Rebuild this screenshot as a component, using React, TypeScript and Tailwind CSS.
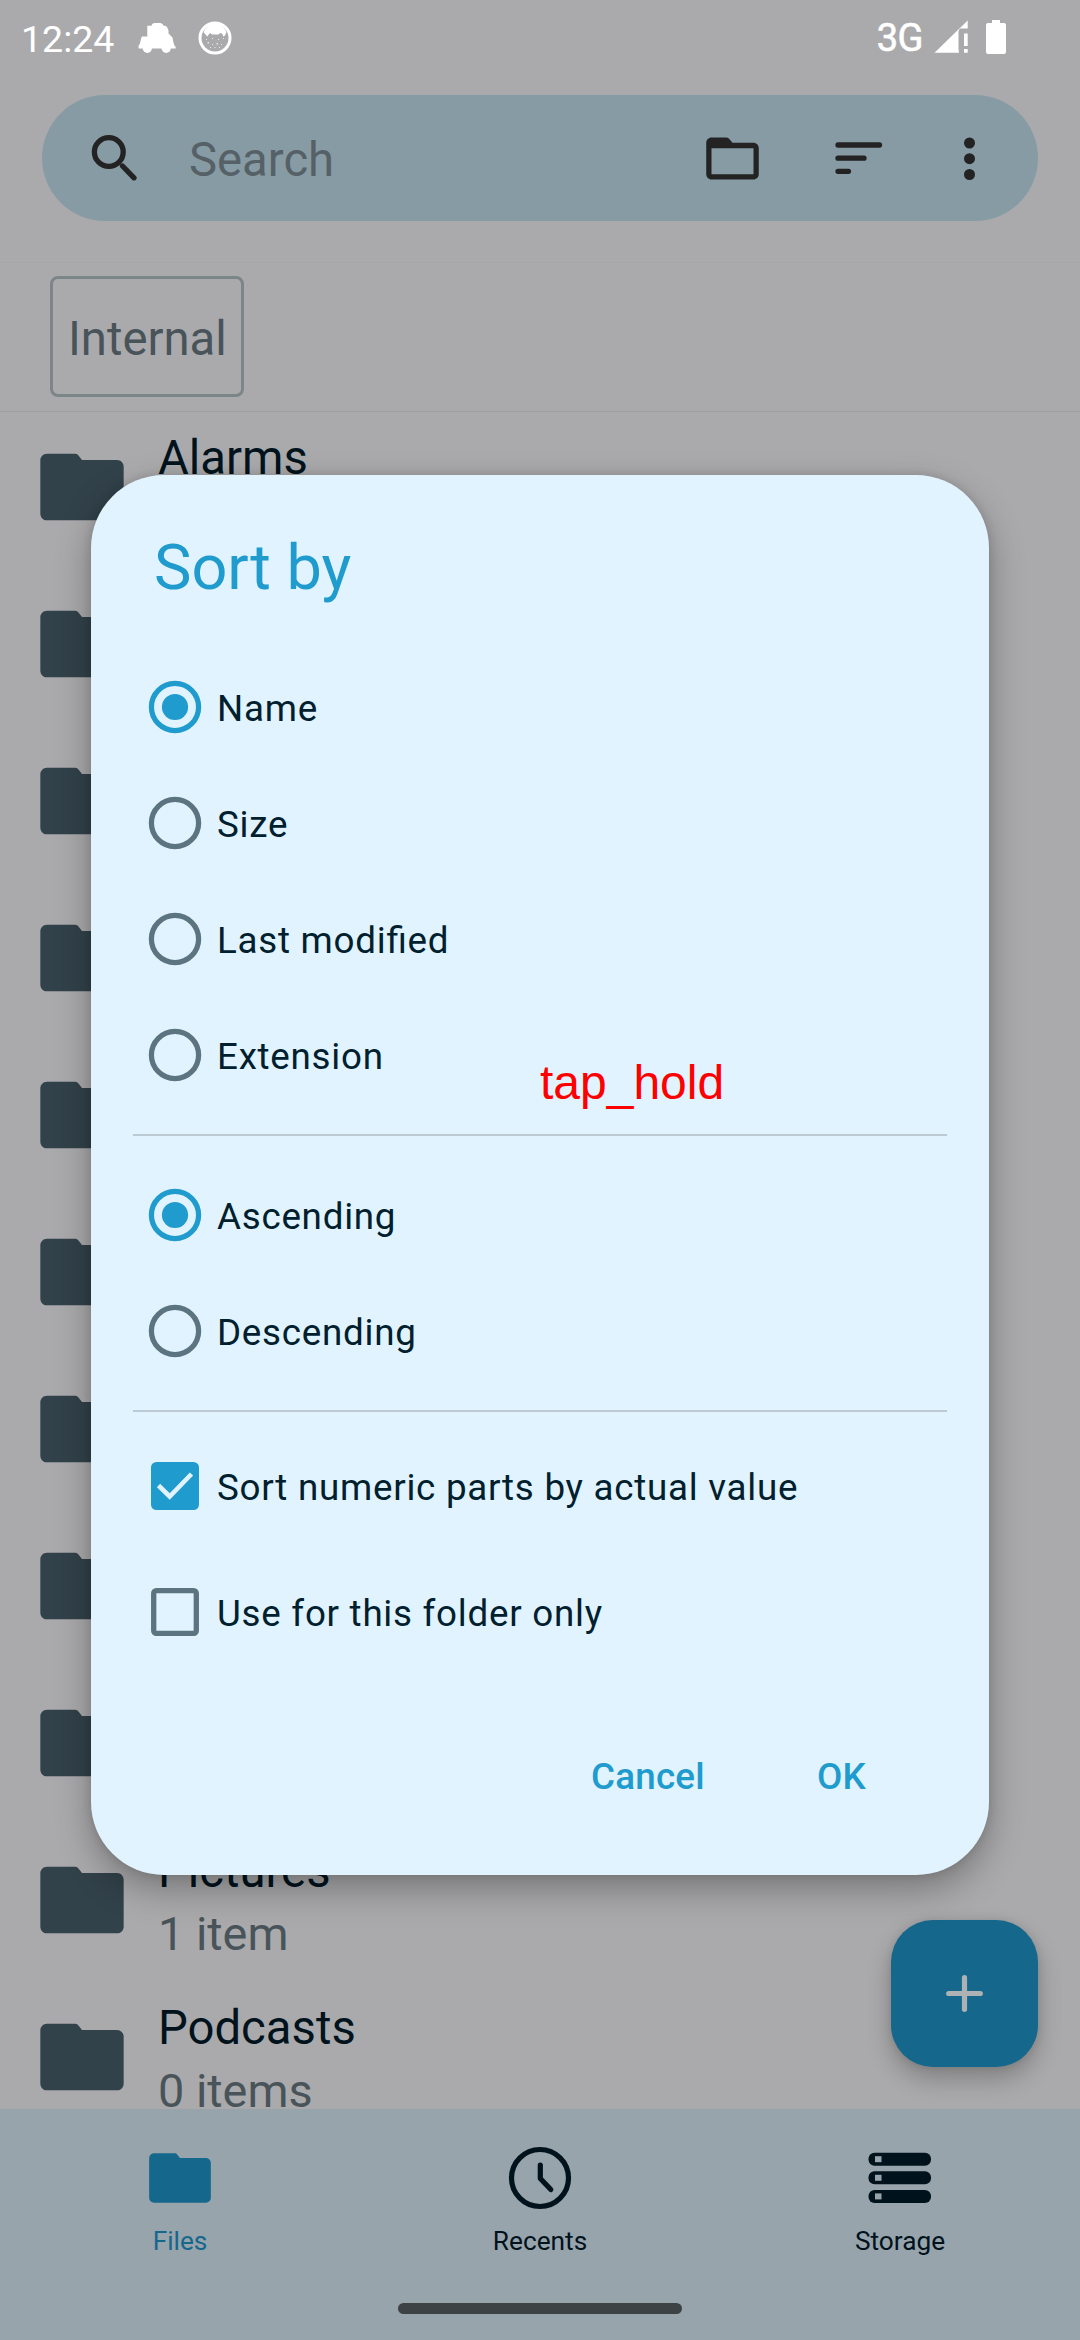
import React from "react";

type FileEntry = { name?: string; detail?: string };

const entries: FileEntry[] = [
  { name: "Alarms" },
  {},
  {},
  {},
  {},
  {},
  {},
  {},
  {},
  { name: "Pictures", detail: "1 item" },
  { name: "Podcasts", detail: "0 items" },
];

function FolderIcon({ className }: { className: string }) {
  return (
    <svg viewBox="0 0 24 24" className={className} fill="currentColor">
      <path d="M10.4 4H3.6C2.7 4 2 4.7 2 5.6V18.4C2 19.3 2.7 20 3.6 20H20.4C21.3 20 22 19.3 22 18.4V7.1C22 6.2 21.3 5.5 20.4 5.5H12L11.2 4.5C11 4.2 10.7 4 10.4 4Z" />
    </svg>
  );
}

function StatusBar() {
  return (
    <div className="flex h-[95px] items-start pl-[21px] pr-[74px] pt-[16px] text-white">
      <div className="h-[46px] w-[117px] text-[37.5px] leading-[46px]">12:24</div>
      <svg viewBox="0 0 110 56" className="-mt-[6px] ml-[-8px] h-[56px] w-[110px] shrink-0" fill="#fff">
        <path d="M17.300 15.700H21.300L22.500 13.700L24.500 13H30.500L32.500 14L33.500 15.700H35.500L37.300 17.500L38.500 20.500V23.500L40.500 25.500L42.500 27.500L43.300 32L44.500 35.500L45.700 37V38.500H8.700L8.500 36L10 33.500L11 28.500L12 26.500H17.300Z" />
        <circle cx="17.300" cy="38.300" r="4.600" />
        <circle cx="36.200" cy="38.300" r="4.600" />
        <circle cx="85" cy="28" r="15" fill="none" stroke="#fff" strokeWidth="3" />
        <path d="M73.500 22C76 16 81 13.500 85 13.500C89 13.500 94 16 96.500 22L95 25.500L93.500 26.500L92 23.500L90 23L88.500 24.500H82L80.500 23L79 24L77.500 26.500L75.500 24.500Z" />
        <g opacity="0.7">
          <path d="M76 29h1v1h-1zM82 28h1v1h-1zM88 29h1v1h-1zM93 28h1v1h-1zM86.500 33h1.500v1.500h-1.500zM77.500 32h1.500v1.500h-1.500zM82 34h1v1h-1zM91 34h1v1h-1zM80 37h1v1h-1zM84.500 37h1v1h-1zM89 37h1v1h-1z" />
        </g>
      </svg>
      <div className="ml-auto flex h-[42px]">
        <div className="pt-px text-[38px] leading-[42px] tracking-[-0.5px] [-webkit-text-stroke:0.6px_#fff]">3G</div>
        <svg viewBox="0 0 34 42" className="ml-[11px] h-[42px] w-[34px]" fill="#fff">
          <path d="M0.500 36.700L33.700 4.500V12.500H26L24.500 15V33L25 36.700Z" />
          <path d="M30 17.500H33.700V30H30ZM30 33H33.700V36.700H30Z" />
        </svg>
        <svg viewBox="0 0 20 42" className="ml-[18px] h-[42px] w-[20px]" fill="#fff">
          <path d="M6 4H14V7H18Q20 7 20 9V36Q20 38 18 38H2Q0 38 0 36V9Q0 7 2 7H6Z" />
        </svg>
      </div>
    </div>
  );
}

function SearchBar() {
  return (
    <div className="mx-[42px] flex h-[126px] items-center rounded-full bg-[#879ba4] pl-[42px] pr-[37px] text-[#222322]">
      <svg viewBox="0 0 63 63" className="size-[63px]" fill="none" stroke="currentColor" strokeWidth="5.3" strokeLinecap="round">
        <circle cx="24.800" cy="25" r="14.400" />
        <path d="M38.500 39L50 50.800" />
      </svg>
      <div className="ml-[42px] pt-[4px] text-[47.25px] leading-[56px] text-[#556167]">Search</div>
      <svg viewBox="0 0 24 24" className="ml-auto size-[63px]" fill="currentColor" fillRule="evenodd">
        <path d="M9.500 4H4C2.900 4 2 4.900 2 6V18C2 19.100 2.900 20 4 20H20C21.100 20 22 19.100 22 18V8C22 6.900 21.100 6 20 6H12L10.700 4.500Q10.200 4 9.500 4ZM4 8.100V18H20V8.100Z" />
      </svg>
      <svg viewBox="0 0 63 63" className="ml-[63px] size-[63px]" stroke="currentColor" strokeWidth="5.3" strokeLinecap="round">
        <path d="M11 18H52.500M11 31.200H37M11 44.300H21.500" />
      </svg>
      <svg viewBox="0 0 63 63" className="ml-[48px] size-[63px]" fill="currentColor">
        <circle cx="31.500" cy="16" r="5.500" />
        <circle cx="31.500" cy="31.700" r="5.500" />
        <circle cx="31.500" cy="47.500" r="5.500" />
      </svg>
    </div>
  );
}

function Breadcrumb() {
  return (
    <div className="h-[191px] border-b border-[#a0a0a2]">
      <div className="h-[42px] border-b border-[#a7a7a9]" />
      <div className="ml-[50px] mt-[13px] flex h-[121px] w-[194px] items-center rounded-[8px] border-[3px] border-[#7c8588] pl-[15px] pt-[5px] text-[47.25px] leading-[56px] text-[#485459]">
        Internal
      </div>
    </div>
  );
}

function FileRow({ name, detail }: FileEntry) {
  return (
    <div className="flex h-[157px] shrink-0 items-start pl-[32px]">
      <FolderIcon className="mt-[25px] size-[100px] text-[#32424a]" />
      <div className="ml-[26px] pt-[15px] text-[47.25px] leading-[62.5px]">
        {name && <div className="text-[#00131d]">{name}</div>}
        {detail && <div className="text-[46.8px] text-[#485459]">{detail}</div>}
      </div>
    </div>
  );
}

function BottomNav() {
  return (
    <div className="flex h-[231px] flex-col bg-[#98a4ac] text-[#00131d]">
      <div className="grid grid-cols-3 text-[26.25px] leading-[32px]">
        <div className="flex flex-col items-center pt-[32px] text-[#15678b]">
          <FolderIcon className="size-[74px]" />
          <span className="mt-[10px]">Files</span>
        </div>
        <div className="flex flex-col items-center pt-[32px]">
          <svg viewBox="0 0 74 74" className="size-[74px]" fill="none" stroke="currentColor" strokeWidth="5.2" strokeLinecap="round" strokeLinejoin="round">
            <circle cx="37" cy="37" r="28.500" />
            <path d="M37.300 24V37.500L47.800 48.500" />
          </svg>
          <span className="mt-[10px]">Recents</span>
        </div>
        <div className="flex flex-col items-center pt-[32px]">
          <svg viewBox="0 0 74 74" className="size-[74px]" fill="currentColor">
            <rect x="5.500" y="11.700" width="62.500" height="13" rx="6" />
            <rect x="5.500" y="30.300" width="62.500" height="13" rx="6" />
            <rect x="5.500" y="48.900" width="62.500" height="13" rx="6" />
            <g fill="#98a4ac">
              <rect x="12" y="15.200" width="6.500" height="6" />
              <rect x="12" y="33.800" width="6.500" height="6" />
              <rect x="12" y="52.400" width="6.500" height="6" />
            </g>
          </svg>
          <span className="mt-[10px]">Storage</span>
        </div>
      </div>
      <div className="mx-auto mt-[46px] h-[11px] w-[284px] rounded-full bg-[#3d4245]" />
    </div>
  );
}

function RadioRow({ label, checked = false }: { label: string; checked?: boolean }) {
  return (
    <div className="flex h-[116px] items-center">
      <svg viewBox="0 0 84 84" className="size-[84px]">
        <circle cx="42" cy="42" r="23.600" fill="none" stroke={checked ? "#209bcd" : "#5b7480"} strokeWidth="5.25" />
        {checked && <circle cx="42" cy="42" r="13.100" fill="#209bcd" />}
      </svg>
      <span className="pt-[4px]">{label}</span>
    </div>
  );
}

function CheckRow({ label, checked = false }: { label: string; checked?: boolean }) {
  return (
    <div className="flex h-[126px] items-center">
      <svg viewBox="0 0 84 84" className="size-[84px]">
        {checked ? (
          <>
            <rect x="18" y="18" width="48" height="48" rx="5.500" fill="#209bcd" />
            <path d="M25.500 41.500L36.700 52.500L58.500 30" fill="none" stroke="#e1f3ff" strokeWidth="4.600" />
          </>
        ) : (
          <rect x="20.700" y="20.700" width="42.600" height="42.600" rx="2.500" fill="none" stroke="#5b7480" strokeWidth="5.300" />
        )}
      </svg>
      <span className="pt-[4px]">{label}</span>
    </div>
  );
}

function SortDialog() {
  return (
    <div className="absolute left-[91px] top-[475px] h-[1400px] w-[898px] rounded-[73px] bg-[#e1f3ff] px-[42px] pt-[56px] shadow-[0_14px_36px_rgba(0,0,0,0.3),0_0_10px_rgba(0,0,0,0.12)]">
      <div className="ml-[21px] text-[63px] leading-[74px] text-[#209bcd]">Sort by</div>
      <div className="text-[36.75px] leading-[44px] tracking-[0.74px] text-[#00202e] [font-feature-settings:'liga'_1]">
        <div className="mt-[44px]">
          <RadioRow label="Name" checked />
          <RadioRow label="Size" />
          <RadioRow label="Last modified" />
          <RadioRow label="Extension" />
        </div>
        <div className="my-[21px] h-[2px] w-[814px] bg-[#bdc9d3]" />
        <RadioRow label="Ascending" checked />
        <RadioRow label="Descending" />
        <div className="mb-[11px] mt-[21px] h-[2px] w-[814px] bg-[#bdc9d3]" />
        <CheckRow label="Sort numeric parts by actual value" checked />
        <CheckRow label="Use for this folder only" />
      </div>
      <div className="mt-[80px] flex justify-end pr-[81px] text-[36.75px] font-medium leading-[44px] tracking-[0.26px] text-[#209bcd]">
        <span>Cancel</span>
        <span className="ml-[112px]">OK</span>
      </div>
    </div>
  );
}

export default function App() {
  return (
    <div className="relative flex h-[2340px] w-[1080px] flex-col overflow-hidden bg-[#aaaaac] font-['Roboto',sans-serif]">
      <StatusBar />
      <SearchBar />
      <Breadcrumb />
      <div className="relative flex h-[1697px] flex-col overflow-hidden">
        {entries.map((entry, i) => (
          <FileRow key={i} name={entry.name} detail={entry.detail} />
        ))}
        <div className="absolute bottom-[42px] right-[42px] flex size-[147px] items-center justify-center rounded-[42px] bg-[#15678b] shadow-[0_12px_24px_rgba(0,0,0,0.24),0_0_8px_rgba(0,0,0,0.1)]">
          <svg viewBox="0 0 63 63" className="size-[63px]" stroke="#aeb2b4" strokeWidth="5.2" strokeLinecap="round">
            <path d="M31.500 15.700V47.300M15.700 31.500H47.300" />
          </svg>
        </div>
      </div>
      <BottomNav />
      <SortDialog />
      <div className="absolute left-[540px] top-[1055px] font-['Liberation_Sans',sans-serif] text-[48px] leading-[55px] text-[#ff0000]">
        tap_hold
      </div>
    </div>
  );
}
